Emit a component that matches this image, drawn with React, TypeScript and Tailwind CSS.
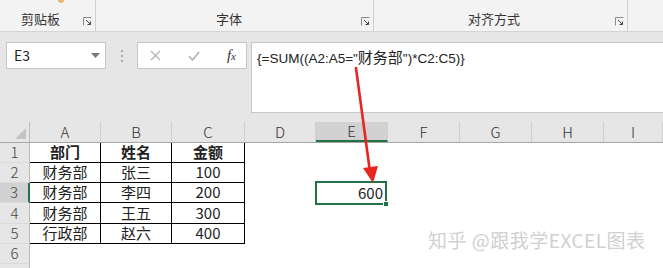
import React from "react";

const FONT = { fontFamily: '"Noto Sans CJK SC", "Noto Sans", sans-serif' };

const COLS = [
  { k: "A", w: "w-[71px]" },
  { k: "B", w: "w-[71px]" },
  { k: "C", w: "w-[73px]" },
  { k: "D", w: "w-[71px]" },
  { k: "E", w: "w-[72px]" },
  { k: "F", w: "w-[72px]" },
  { k: "G", w: "w-[72px]" },
  { k: "H", w: "w-[72px]" },
  { k: "I", w: "w-[59px]" },
];

const ROWS = [
  { n: "1", h: "h-[20px]", cells: ["部门", "姓名", "金额"], bold: true },
  { n: "2", h: "h-[20px]", cells: ["财务部", "张三", "100"] },
  { n: "3", h: "h-[20px]", cells: ["财务部", "李四", "200"] },
  { n: "4", h: "h-[21px]", cells: ["财务部", "王五", "300"] },
  { n: "5", h: "h-[20px]", cells: ["行政部", "赵六", "400"] },
  { n: "6", h: "h-[20px]", cells: [] },
  { n: "", h: "h-[20px]", cells: [] },
];

function Launcher() {
  return (
    <svg width="9" height="9" viewBox="0 0 9 9" className="shrink-0">
      <path d="M0.5 8.5 V0.5 H8.5" fill="none" stroke="#8a8a8a" />
      <path d="M3 3 L7.5 7.5 M7.5 4.5 V7.5 H4.5" fill="none" stroke="#444" />
    </svg>
  );
}

function Group({ label, w, labelPad }: { label: string; w: string; labelPad: string }) {
  return (
    <div className={`${w} h-full flex items-end border-r border-[#d0d0d0] pb-[3px]`}>
      <div className={`flex-1 text-[13px] text-[#333] ${labelPad}`}>{label}</div>
      <div className="pr-[3px] pb-[2px]">
        <Launcher />
      </div>
    </div>
  );
}

export default function App() {
  return (
    <div className="relative w-[663px] h-[268px] overflow-hidden bg-white" style={FONT}>
      {/* Ribbon group labels */}
      <div className="h-[32px] bg-[#f3f3f3] border-b border-[#d4d4d4] flex">
        <div className="w-[96px] h-full flex items-end border-r border-[#d0d0d0] pb-[3px] relative">
          <div className="absolute left-[58px] top-0 w-[6px] h-[3px] rounded-b bg-[#e8b86a]" />
          <div className="flex-1 text-[13px] text-[#333] pl-[21px]">剪贴板</div>
          <div className="pr-[3px] pb-[2px]">
            <Launcher />
          </div>
        </div>
        <Group label="字体" w="w-[278px]" labelPad="pl-[120px]" />
        <Group label="对齐方式" w="w-[254px]" labelPad="pl-[94px]" />
        <div className="flex-1" />
      </div>

      {/* Formula bar */}
      <div className="h-[90px] bg-[#e6e6e6] flex items-start pt-[10px]">
        <div className="ml-[6px] w-[100px] h-[27px] bg-white border border-[#c6c6c6] flex items-center justify-between pl-[7px] pr-[5px]">
          <span className="text-[14px] text-[#222]">E3</span>
          <svg width="9" height="5" viewBox="0 0 9 5">
            <path d="M0 0 H9 L4.5 5 Z" fill="#777" />
          </svg>
        </div>
        <div className="w-[31px] h-[27px] flex flex-col items-center justify-center gap-[3px]">
          <span className="w-[2px] h-[2px] bg-[#a8a8a8]" />
          <span className="w-[2px] h-[2px] bg-[#a8a8a8]" />
          <span className="w-[2px] h-[2px] bg-[#a8a8a8]" />
        </div>
        <div className="w-[110px] h-[27px] bg-white border border-[#c6c6c6] flex items-center justify-between px-[12px]">
          <svg width="11" height="11" viewBox="0 0 11 11">
            <path d="M1 1 L10 10 M10 1 L1 10" stroke="#b4b4b4" strokeWidth="1.4" />
          </svg>
          <svg width="12" height="10" viewBox="0 0 12 10">
            <path d="M1 5 L4.5 9 L11 1" fill="none" stroke="#b4b4b4" strokeWidth="1.6" />
          </svg>
          <span
            className="text-[15px] italic text-[#333] -mr-[2px]"
            style={{ fontFamily: '"Liberation Serif", serif' }}
          >
            f<span className="text-[11px]">x</span>
          </span>
        </div>
        <div
          className="ml-[4px] flex-1 h-[71px] bg-white border border-r-0 border-[#c6c6c6] pl-[5px] pt-[4px] text-[13.5px] leading-[20px] text-[#222]"
          style={{ fontFamily: '"Liberation Sans", "Noto Sans CJK SC", sans-serif' }}
        >
          {'{=SUM((A2:A5="'}
          <span className="text-[15px]" style={FONT}>
            财务部
          </span>
          {'")*C2:C5)}'}
        </div>
      </div>

      {/* Column headers */}
      <div className="flex h-[21px] bg-[#e6e6e6] border-b border-[#a6a6a6]">
        <div className="w-[30px] h-full border-r border-[#bcbcbc] flex items-end justify-end pr-[3px] pb-[3px]">
          <svg width="11" height="11" viewBox="0 0 11 11">
            <path d="M11 0 V11 H0 Z" fill="#c4c4c4" />
          </svg>
        </div>
        {COLS.map((c) => (
          <div
            key={c.k}
            className={`${c.w} h-full flex items-center justify-center text-[15px] font-light text-[#333] border-r border-[#d0d0d0] ${
              c.k === "E" ? "bg-[#d2d2d2] border-b-2 border-b-[#217346]" : ""
            }`}
          >
            {c.k}
          </div>
        ))}
      </div>

      {/* Rows */}
      {ROWS.map((r, ri) => (
        <div key={ri} className={`flex ${r.h}`}>
          <div
            className={`w-[30px] h-full flex items-center justify-center text-[15px] font-light text-[#444] border-b border-[#dadada] ${
              r.n === "3" ? "bg-[#d2d2d2] border-r-2 border-r-[#217346]" : "bg-[#e6e6e6] border-r border-r-[#bcbcbc]"
            }`}
          >
            {r.n}
          </div>
          {COLS.map((c, i) => {
            const inTable = i < 3 && r.cells.length > 0;
            const isE3 = r.n === "3" && c.k === "E";
            return (
              <div
                key={c.k}
                className={`${c.w} h-full text-[15px] text-[#222] flex items-center ${
                  inTable ? "border-r border-b border-black justify-center" : ""
                } ${r.bold ? "font-bold" : ""}`}
              >
                {inTable ? r.cells[i] : null}
                {isE3 && (
                  <div className="relative w-full h-[24px] -mx-[1px] border-2 border-[#217346] flex items-center justify-end pr-[2px]">
                    600
                    <span className="absolute -right-[4px] -bottom-[4px] w-[6px] h-[6px] bg-[#217346] border border-white" />
                  </div>
                )}
              </div>
            );
          })}
        </div>
      ))}

      {/* Red arrow */}
      <svg className="absolute left-0 top-0 pointer-events-none" width="663" height="268">
        <path d="M356 68 L370 172" stroke="#e8261f" strokeWidth="2.6" strokeLinecap="round" />
        <path d="M363 168 L373 183 L378 166 Z" fill="#e8261f" />
      </svg>

      {/* Watermark */}
      <div
        className="absolute left-[428px] top-[226px] text-[19px] text-[#d0d0d0] tracking-[0.5px]"
        style={{ textShadow: "0 0 1px #fff, 0 0 2px #fff" }}
      >
        知乎 @跟我学EXCEL图表
      </div>
    </div>
  );
}
